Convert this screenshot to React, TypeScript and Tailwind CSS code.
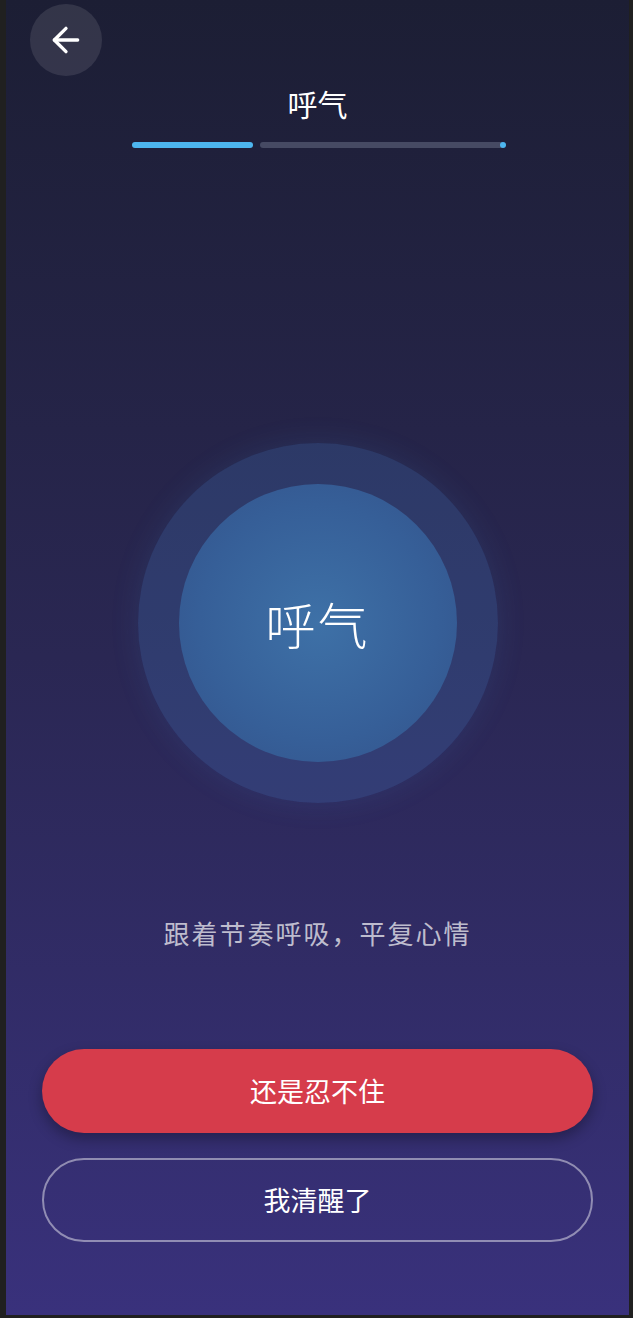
import { ArrowLeft } from 'lucide-react';

export default function App() {
  return (
    <div
      className="w-[633px] h-[1318px] bg-[#202020] pl-[6px]"
      style={{ fontFamily: '"Noto Sans CJK SC", "Noto Sans", sans-serif' }}
    >
      <div className="w-[623px] h-[1315px] flex flex-col bg-gradient-to-b from-[#1c1e34] via-[#2a2753] to-[#39317c]">
        {/* Back button */}
        <div className="pt-[4px] pl-[24px]">
          <button className="w-[72px] h-[72px] rounded-full bg-white/10 flex items-center justify-center text-white">
            <ArrowLeft size={40} strokeWidth={2} />
          </button>
        </div>

        {/* Title */}
        <h1 className="mt-[7px] text-center text-[30px] leading-[40px] font-normal text-white">呼气</h1>

        {/* Progress */}
        <div className="mt-[19px] mx-auto w-[372px] flex gap-[7px]">
          <div className="w-[121px] h-[6px] rounded-full bg-[#4db6ef]" />
          <div className="relative flex-1 h-[6px] rounded-full bg-[#464a63]">
            <div className="absolute right-[-2px] top-0 w-[6px] h-[6px] rounded-full bg-[#4db6ef]" />
          </div>
        </div>

        {/* Breathing circle */}
        <div className="mt-[295px] flex justify-center">
          <div className="w-[360px] h-[360px] rounded-full bg-[#4a90e2]/20 shadow-[0_0_30px_rgba(74,144,226,0.12)] flex items-center justify-center">
            <div className="w-[278px] h-[278px] rounded-full bg-[radial-gradient(circle,#3e71a7_0%,#365f98_60%,#33528a_100%)] flex items-center justify-center">
              <span className="text-[50px] leading-none font-light text-white tracking-[2px]">呼气</span>
            </div>
          </div>
        </div>

        {/* Hint */}
        <p className="mt-[113px] text-center text-[26px] leading-[34px] tracking-[2px] text-white/70">
          跟着节奏呼吸，平复心情
        </p>

        {/* Actions */}
        <div className="mt-[99px] px-[36px] flex flex-col gap-[25px]">
          <button className="h-[84px] rounded-full bg-[#d63c4b] text-white text-[27px] font-normal shadow-[0_6px_14px_rgba(0,0,0,0.3)]">
            还是忍不住
          </button>
          <button className="h-[84px] rounded-full border-2 border-white/45 text-white text-[27px] font-normal">
            我清醒了
          </button>
        </div>
      </div>
    </div>
  );
}
